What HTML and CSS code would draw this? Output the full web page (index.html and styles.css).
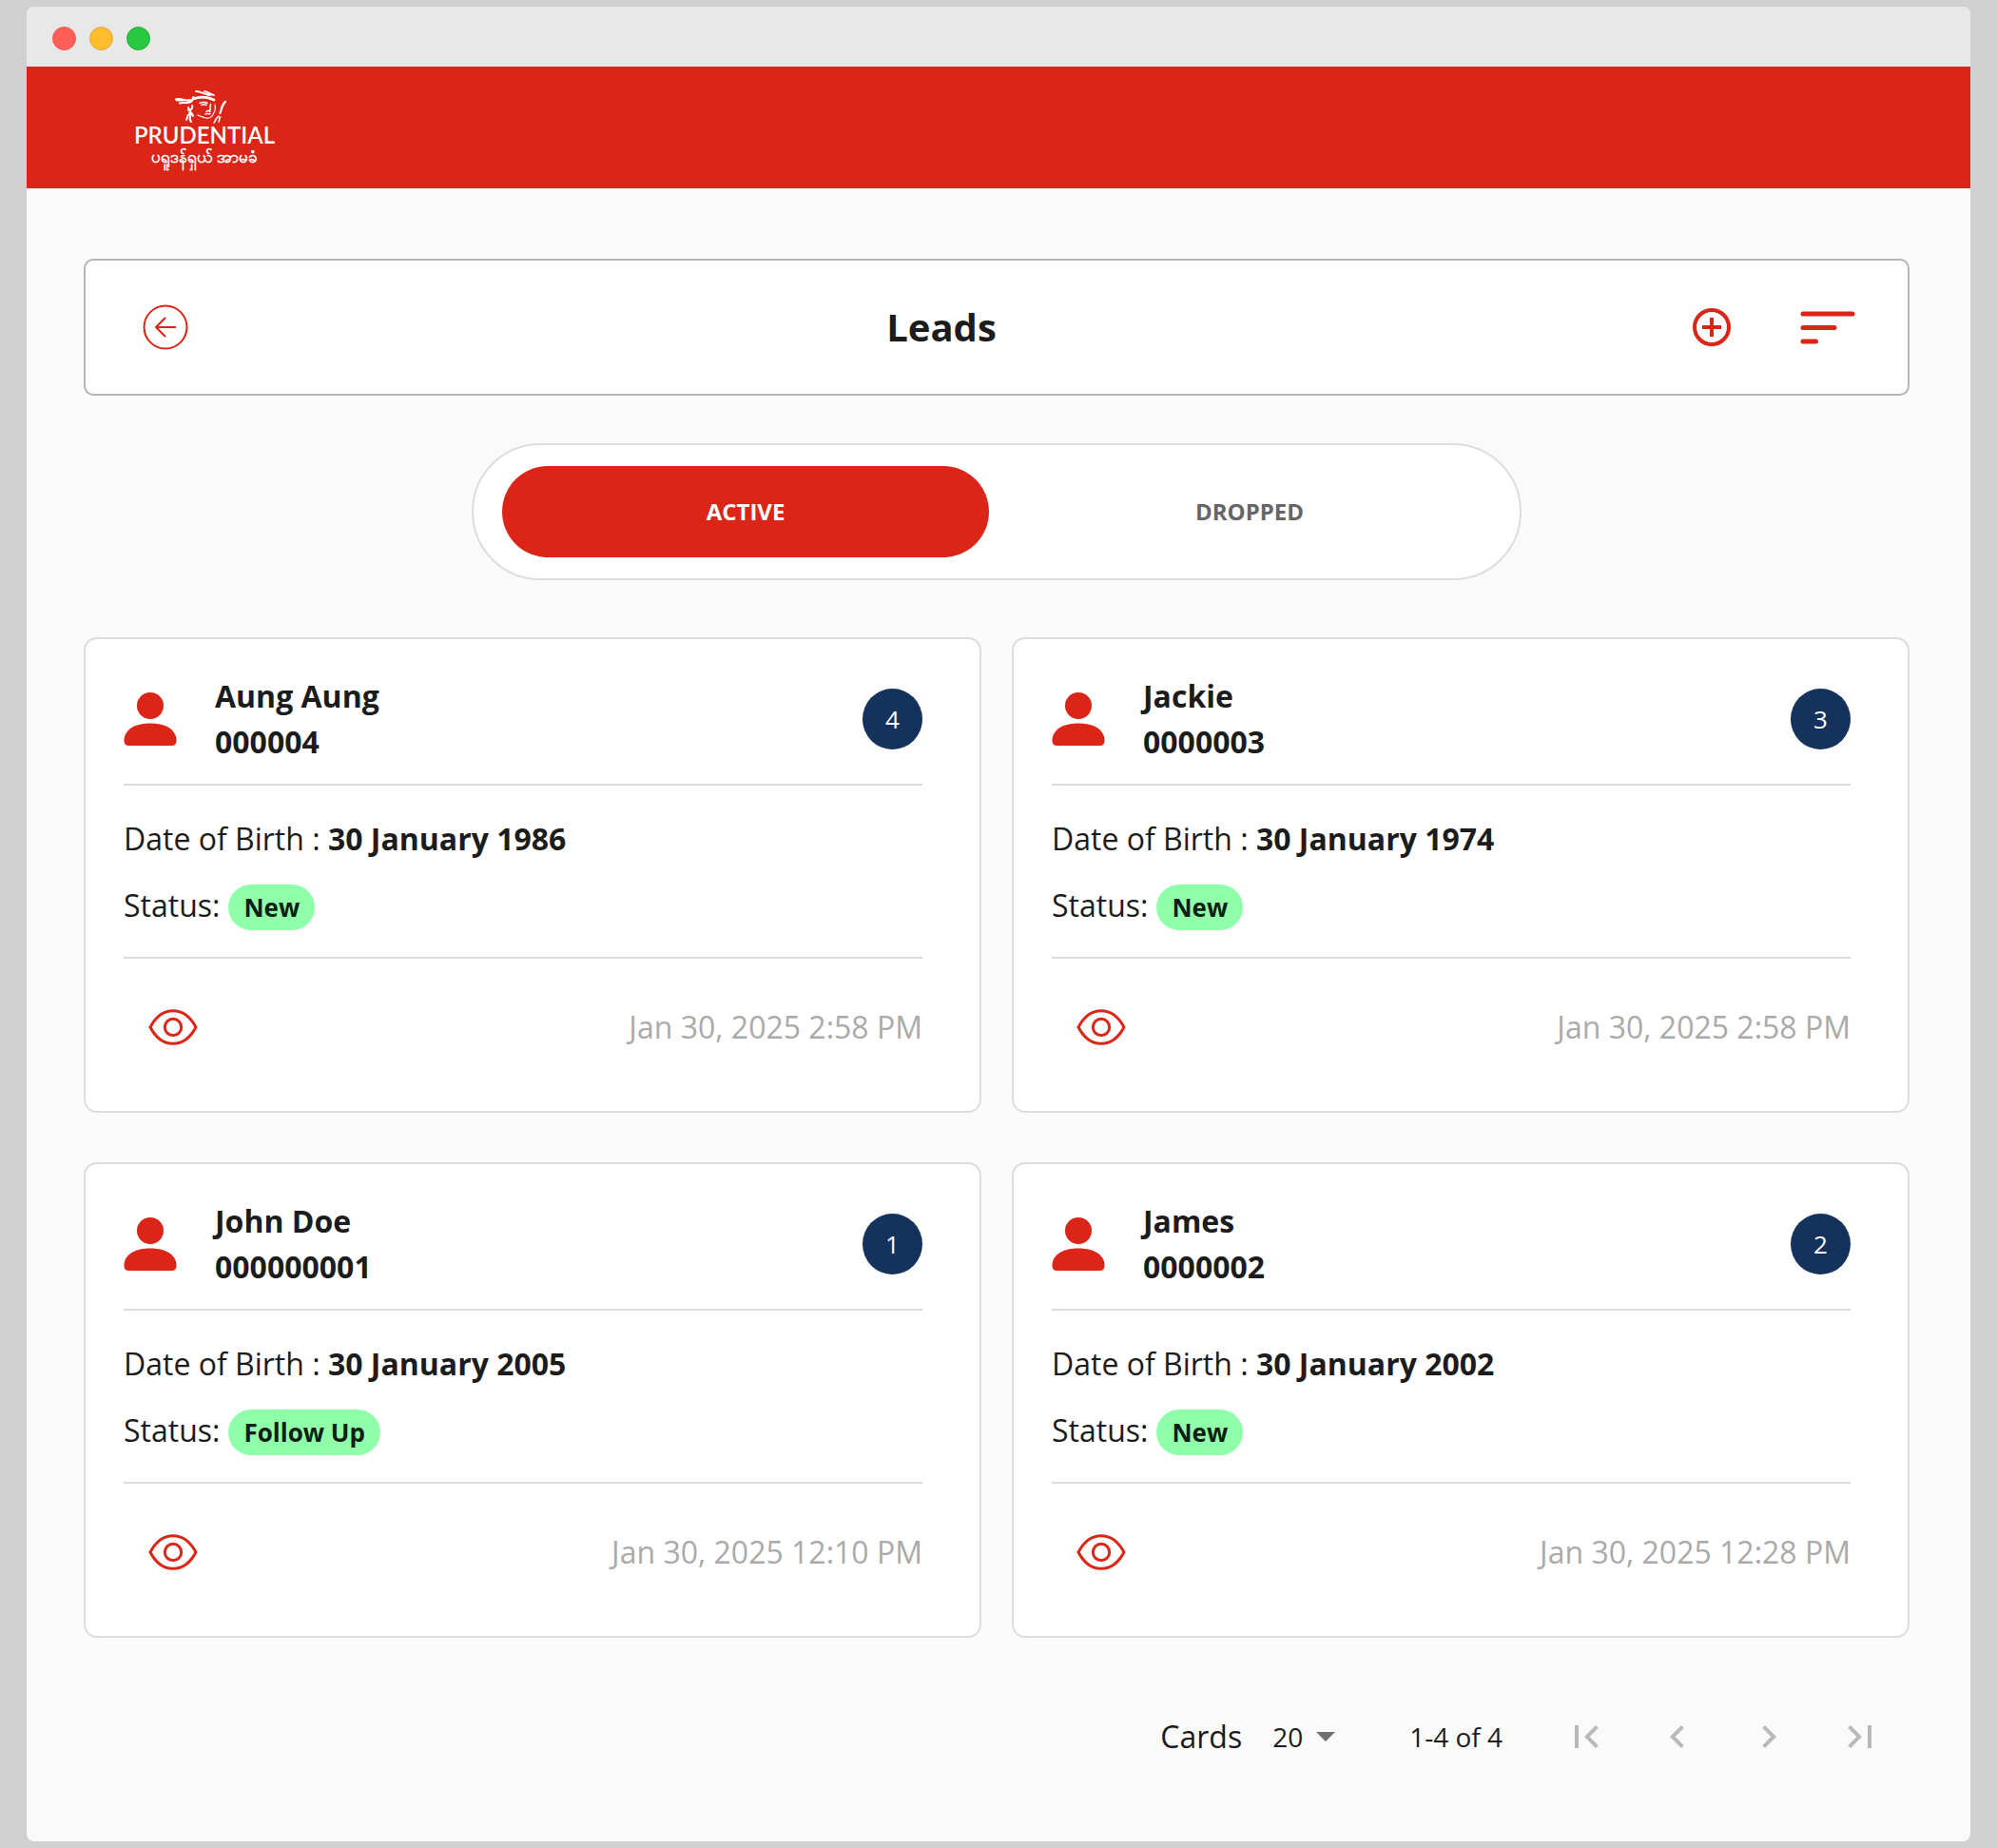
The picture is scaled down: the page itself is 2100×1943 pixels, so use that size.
FILE: index.html
```html
<!DOCTYPE html>
<html lang="en">
<head>
<meta charset="utf-8">
<title>Leads</title>
<meta name="viewport" content="width=device-width, initial-scale=1">
<link rel="stylesheet" href="styles.css">
</head>
<body>
<svg class="sprite" aria-hidden="true">
  <symbol id="person" viewBox="0 0 56 56"><ellipse cx="28" cy="14" rx="14" ry="14"/><path d="M0.500 50.500C0.500 41 9 32.500 28 32.500S55.500 41 55.500 50.500Q55.500 56 50.500 56H5.500Q0.500 56 0.500 50.500Z"/></symbol>
  <symbol id="eye" viewBox="0 0 52 38"><path d="M2 19C7 9.500 15 1.700 26 1.700S45 9.500 50 19C45 28.500 37 36.300 26 36.300S7 28.500 2 19Z"/><circle cx="26" cy="19" r="8.700"/></symbol>
</svg>
<div class="window">
  <div class="titlebar"><span class="dot dot-red"></span><span class="dot dot-yellow"></span><span class="dot dot-green"></span></div>
  <header class="brandbar">
    <a class="logo" href="#" aria-label="Prudential">
      <svg class="logo-face" viewBox="0 0 55 36" fill="none" stroke="#fff" stroke-width="1.500" stroke-linecap="round" stroke-linejoin="round">
        <path d="M1 10.500C6 8 11 14 18 11M2 11.500C6 12 11 11 18 11M5 14.500C9 13 14 16 18 12" stroke-width="2"/>
        <path d="M19 10C27 7 35 8 41 11" stroke-width="2.800"/>
        <path d="M19 8C21 10 23 9 25 9M22 2C27 2 31 5 36 6M31 2C35 2.500 37 5 41 6M30 4L38 6" stroke-width="1.800"/>
        <path d="M26 14.500C29 13 32 13.500 34 14.500M28 16.500C30 15 32 16 33 16.500"/>
        <path d="M37.500 15.500C36 20 39 21 36 22.500M33 23.500C34 22 36 22 37 23.500M32 26C34 24.500 35 26.500 37 25.500"/>
        <path d="M24 27C31 30 36 32 39 28C42 24 43 20 42 16" stroke-width="1.200"/>
        <path d="M18 17C19 20 17 22 14 22M14 19C15 24 18 24 19 28M15 25C19 27 13 30 17 34M12 32C14 29 12 28 15 26" stroke-width="2"/>
        <path d="M53 13C50 15 49 20 47.500 25" stroke-width="2.200"/>
        <path d="M46 28L43 31M47 31L46 34M43 32L41 35M48 29L46.500 30"/>
      </svg>
      <span class="logo-name">PRUDENTIAL</span>
      <span class="logo-local" lang="my">ပရူဒန်ရှယ် အာမခံ</span>
    </a>
  </header>
  <main class="page">
    <div class="heading">
      <button class="icon-btn" aria-label="Back"><svg width="48" height="48" viewBox="0 0 48 48" fill="none" stroke="currentColor" stroke-width="2"><circle cx="24" cy="24" r="22.500"/><path d="M35 24H14M24 14L14 24L24 34" stroke-linejoin="round"/></svg></button>
      <h1>Leads</h1>
      <button class="icon-btn" aria-label="Add lead"><svg width="40" height="40" viewBox="0 0 40 40" fill="none" stroke="currentColor" stroke-width="4"><circle cx="20" cy="20" r="18"/><path d="M10 20H30M20 10V30"/></svg></button>
      <button class="icon-btn sort" aria-label="Sort"><svg width="58" height="36" viewBox="0 0 58 36" stroke="currentColor" stroke-width="5" stroke-linecap="round"><path d="M3 4H55M3 18.500H36M3 33H16.500"/></svg></button>
    </div>
    <div class="toggle">
      <button class="tab tab-on" aria-pressed="true">ACTIVE</button>
      <button class="tab" aria-pressed="false">DROPPED</button>
    </div>
    <div class="cards">
      <article class="card">
        <div class="card-head"><svg class="person"><use href="#person"/></svg><h2>Aung Aung<br>000004</h2><span class="badge">4</span></div>
        <div class="card-body"><p>Date of Birth : <b>30 January 1986</b></p><p class="status">Status: <span class="chip">New</span></p></div>
        <div class="card-foot"><button class="icon-btn" aria-label="View"><svg class="eye"><use href="#eye"/></svg></button><time>Jan 30, 2025 2:58 PM</time></div>
      </article>
      <article class="card">
        <div class="card-head"><svg class="person"><use href="#person"/></svg><h2>Jackie<br>0000003</h2><span class="badge">3</span></div>
        <div class="card-body"><p>Date of Birth : <b>30 January 1974</b></p><p class="status">Status: <span class="chip">New</span></p></div>
        <div class="card-foot"><button class="icon-btn" aria-label="View"><svg class="eye"><use href="#eye"/></svg></button><time>Jan 30, 2025 2:58 PM</time></div>
      </article>
      <article class="card">
        <div class="card-head"><svg class="person"><use href="#person"/></svg><h2>John Doe<br>000000001</h2><span class="badge">1</span></div>
        <div class="card-body"><p>Date of Birth : <b>30 January 2005</b></p><p class="status">Status: <span class="chip">Follow Up</span></p></div>
        <div class="card-foot"><button class="icon-btn" aria-label="View"><svg class="eye"><use href="#eye"/></svg></button><time>Jan 30, 2025 12:10 PM</time></div>
      </article>
      <article class="card">
        <div class="card-head"><svg class="person"><use href="#person"/></svg><h2>James<br>0000002</h2><span class="badge">2</span></div>
        <div class="card-body"><p>Date of Birth : <b>30 January 2002</b></p><p class="status">Status: <span class="chip">New</span></p></div>
        <div class="card-foot"><button class="icon-btn" aria-label="View"><svg class="eye"><use href="#eye"/></svg></button><time>Jan 30, 2025 12:28 PM</time></div>
      </article>
    </div>
    <nav class="pager" aria-label="Pagination">
      <label for="per-page">Cards</label>
      <span class="select-wrap"><select id="per-page"><option>20</option><option>50</option></select><svg class="caret" width="20" height="10" viewBox="0 0 20 10"><path d="M0 0H20L10 10Z"/></svg></span>
      <span class="range">1-4 of 4</span>
      <button class="page-btn" aria-label="First page" disabled><svg viewBox="0 0 24 24"><path d="M18.410 16.590L13.820 12l4.590-4.590L17 6l-6 6 6 6zM6 6h2v12H6z"/></svg></button>
      <button class="page-btn" aria-label="Previous page" disabled><svg viewBox="0 0 24 24"><path d="M15.410 7.410L14 6l-6 6 6 6 1.410-1.410L10.830 12z"/></svg></button>
      <button class="page-btn" aria-label="Next page" disabled><svg viewBox="0 0 24 24"><path d="M10 6L8.590 7.410 13.170 12l-4.580 4.590L10 18l6-6z"/></svg></button>
      <button class="page-btn" aria-label="Last page" disabled><svg viewBox="0 0 24 24"><path d="M5.590 7.410L10.180 12l-4.590 4.590L7 18l6-6-6-6zM16 6h2v12h-2z"/></svg></button>
    </nav>
  </main>
</div>
</body>
</html>
```
FILE: styles.css
```css
* { box-sizing: border-box; }
body {
  margin: 0;
  padding: 7px 28px;
  background: #d0d0d0;
  color: #1c1c1c;
  font-family: "Open Sans", "Noto Sans", sans-serif;
  font-size: 32px;
  line-height: 48px;
}
h1, h2, p { margin: 0; }
svg { display: block; flex: none; }
button, select { font: inherit; color: inherit; border: 0; padding: 0; background: none; }
.sprite { position: absolute; width: 0; height: 0; }

.window { background: #fafafa; border-radius: 8px; overflow: hidden; }
.titlebar { display: flex; align-items: center; gap: 14px; height: 63px; padding: 4px 27px 0; background: #e8e8e8; }
.dot { width: 25px; height: 25px; border-radius: 50%; border: 1px solid; }
.dot-red { background: #ff5f57; border-color: #e9564f; }
.dot-yellow { background: #ffbd2e; border-color: #e2a746; }
.dot-green { background: #28c840; border-color: #24b23a; }

.brandbar { height: 128px; padding: 24px 112px 0; background: #da2517; }
.logo { display: flex; flex-direction: column; align-items: center; width: 150px; color: #fff; text-decoration: none; white-space: nowrap; }
.logo-face { width: 55px; height: 36px; margin-right: 8px; }
.logo-name { font: 600 24px/24px Lato, sans-serif; }
.logo-local { font-size: 17px; font-weight: 600; line-height: 22px; }

.page { padding: 74px 64px 62px 60px; }
.heading { display: flex; align-items: center; height: 144px; padding: 0 55px 0 60px; background: #fff; border: 2px solid #b5b5b5; border-radius: 10px; }
.heading h1 { flex: 1; padding-left: 2px; text-align: center; font-size: 40px; font-weight: 700; line-height: 60px; }
.icon-btn { display: grid; place-items: center; color: #da2517; }
.sort { margin-left: 73px; }

.toggle { display: grid; grid-template-columns: 1fr 1fr; gap: 18px; max-width: 1104px; margin: 50px auto 60px; padding: 22px 28px 22px 30px; background: #fff; border: 2px solid #ddd; border-radius: 72px; }
.tab { height: 96px; border-radius: 48px; color: #666; font-size: 24px; font-weight: 700; }
.tab-on { background: #da2517; color: #fff; }

.cards { display: grid; grid-template-columns: 1fr 1fr; gap: 52px 32px; }
.card { padding: 36px 60px 40px 40px; background: #fff; border: 2px solid #ddd; border-radius: 14px; }
.card-head { display: flex; align-items: center; padding-bottom: 20px; border-bottom: 2px solid #ddd; }
.person { width: 56px; height: 56px; margin-right: 40px; fill: #da2517; }
.card h2 { flex: 1; font-size: 32px; font-weight: 700; line-height: 48px; }
.badge { width: 63px; height: 64px; border-radius: 50%; background: #14325c; color: #fff; font-size: 26px; line-height: 64px; text-align: center; }
.card-body { display: grid; gap: 22px; padding: 32px 0 28px; border-bottom: 2px solid #ddd; }
.status { display: flex; align-items: flex-start; gap: 9px; }
.chip { height: 48px; margin-top: 2px; padding: 0 16px; border-radius: 24px; background: #90ffa9; color: #0e2012; font-size: 26px; font-weight: 700; }
.card-foot { display: flex; align-items: center; justify-content: space-between; height: 120px; padding: 24px 0 0 26px; }
.eye { width: 52px; height: 38px; fill: none; stroke: #da2517; stroke-width: 3; }
.card-foot time { color: #aaa; }

.pager { display: flex; align-items: center; justify-content: flex-end; height: 96px; margin-top: 56px; padding-right: 4px; }
.select-wrap { position: relative; display: flex; align-items: center; margin: 0 76px 0 32px; font-size: 28px; }
.select-wrap select { width: 68px; appearance: none; }
.caret { position: absolute; right: 2px; fill: #707070; pointer-events: none; }
.range { margin-right: 40px; font-size: 28px; }
.page-btn { width: 96px; height: 96px; display: grid; place-items: center; }
.page-btn svg { width: 48px; height: 48px; fill: #b9b9b9; }
```
